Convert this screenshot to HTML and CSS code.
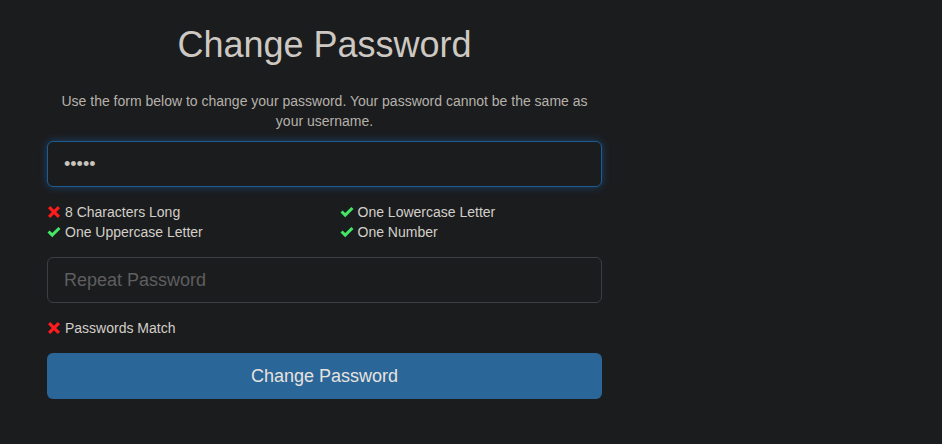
FILE: index.html
```html
<!DOCTYPE html>
<html>

<head>
    <title>Change Password</title>
    <link rel="stylesheet" href="styles.css">
</head>

<body>
    <div class="pw-box">
        <h2 class="pw-title">Change Password</h2>
        <p class="pw-text">Use the form below to change your password. Your password cannot be the same as your username.</p>
        <form class="pw-form" onsubmit="return false">
            <input class="pw-input pw-input-focus" type="password" value="12345" autofocus>
            <ul class="pw-rules">
                <li>
                    <svg class="icon" viewBox="0 0 14 14"><path d="M1 3.2 3.2 1 7 4.8 10.8 1 13 3.2 9.2 7 13 10.8 10.8 13 7 9.2 3.2 13 1 10.8 4.8 7Z" fill="#ff1c1c"/></svg>
                    <span>8 Characters Long</span>
                </li>
                <li>
                    <svg class="icon" viewBox="0 0 14 14"><path d="M0.5 7.6 2.6 5.5 5.2 8.1 11.4 1.9 13.5 4 5.2 12.3Z" fill="#43e765"/></svg>
                    <span>One Lowercase Letter</span>
                </li>
                <li>
                    <svg class="icon" viewBox="0 0 14 14"><path d="M0.5 7.6 2.6 5.5 5.2 8.1 11.4 1.9 13.5 4 5.2 12.3Z" fill="#43e765"/></svg>
                    <span>One Uppercase Letter</span>
                </li>
                <li>
                    <svg class="icon" viewBox="0 0 14 14"><path d="M0.5 7.6 2.6 5.5 5.2 8.1 11.4 1.9 13.5 4 5.2 12.3Z" fill="#43e765"/></svg>
                    <span>One Number</span>
                </li>
            </ul>
            <input class="pw-input" type="password" placeholder="Repeat Password">
            <ul class="pw-rules pw-rules-one">
                <li>
                    <svg class="icon" viewBox="0 0 14 14"><path d="M1 3.2 3.2 1 7 4.8 10.8 1 13 3.2 9.2 7 13 10.8 10.8 13 7 9.2 3.2 13 1 10.8 4.8 7Z" fill="#ff1c1c"/></svg>
                    <span>Passwords Match</span>
                </li>
            </ul>
            <button class="pw-btn" type="submit">Change Password</button>
        </form>
    </div>
</body>

</html>
```

FILE: styles.css
```css
html, body {
    margin: 0;
    padding: 0;
    background-color: #1b1c1e;
    font-family: "Liberation Sans", Arial, sans-serif;
    color: #d3cfc9;
}
.pw-box {
    width: 555px;
    margin-left: 47px;
    padding-top: 25px;
}
.pw-title {
    margin: 0;
    font-size: 36px;
    font-weight: normal;
    line-height: 40px;
    text-align: center;
    color: #cdc8c2;
}
.pw-text {
    margin: 26px 0 10px 0;
    font-size: 14px;
    line-height: 20px;
    text-align: center;
    color: #b6b1aa;
}
.pw-form {
    display: flex;
    flex-direction: column;
    gap: 15px;
}
.pw-input {
    height: 46px;
    box-sizing: border-box;
    padding: 10px 16px;
    font-family: inherit;
    font-size: 18px;
    color: #c8c3bc;
    background-color: #1b1c1e;
    border: 1px solid #3b3f43;
    border-radius: 6px;
    outline: none;
}
.pw-input::placeholder {
    color: #5e5e5e;
}
.pw-input-focus {
    border-color: #1d5d93;
    box-shadow: 0 0 8px rgba(34, 112, 196, 0.45);
    caret-color: #c8c3bc;
}
.pw-rules {
    list-style: none;
    margin: 0;
    padding: 0;
    display: grid;
    grid-template-columns: 1fr 1fr;
    column-gap: 30px;
    font-size: 14px;
    line-height: 20px;
}
.pw-rules li {
    display: flex;
    align-items: center;
}
.pw-rules .icon {
    width: 14px;
    height: 14px;
    margin-right: 4px;
    flex: none;
}
.pw-btn {
    height: 46px;
    border: none;
    border-radius: 6px;
    background-color: #2b6699;
    color: #e6e3df;
    font-family: inherit;
    font-size: 18px;
    cursor: pointer;
}
```
